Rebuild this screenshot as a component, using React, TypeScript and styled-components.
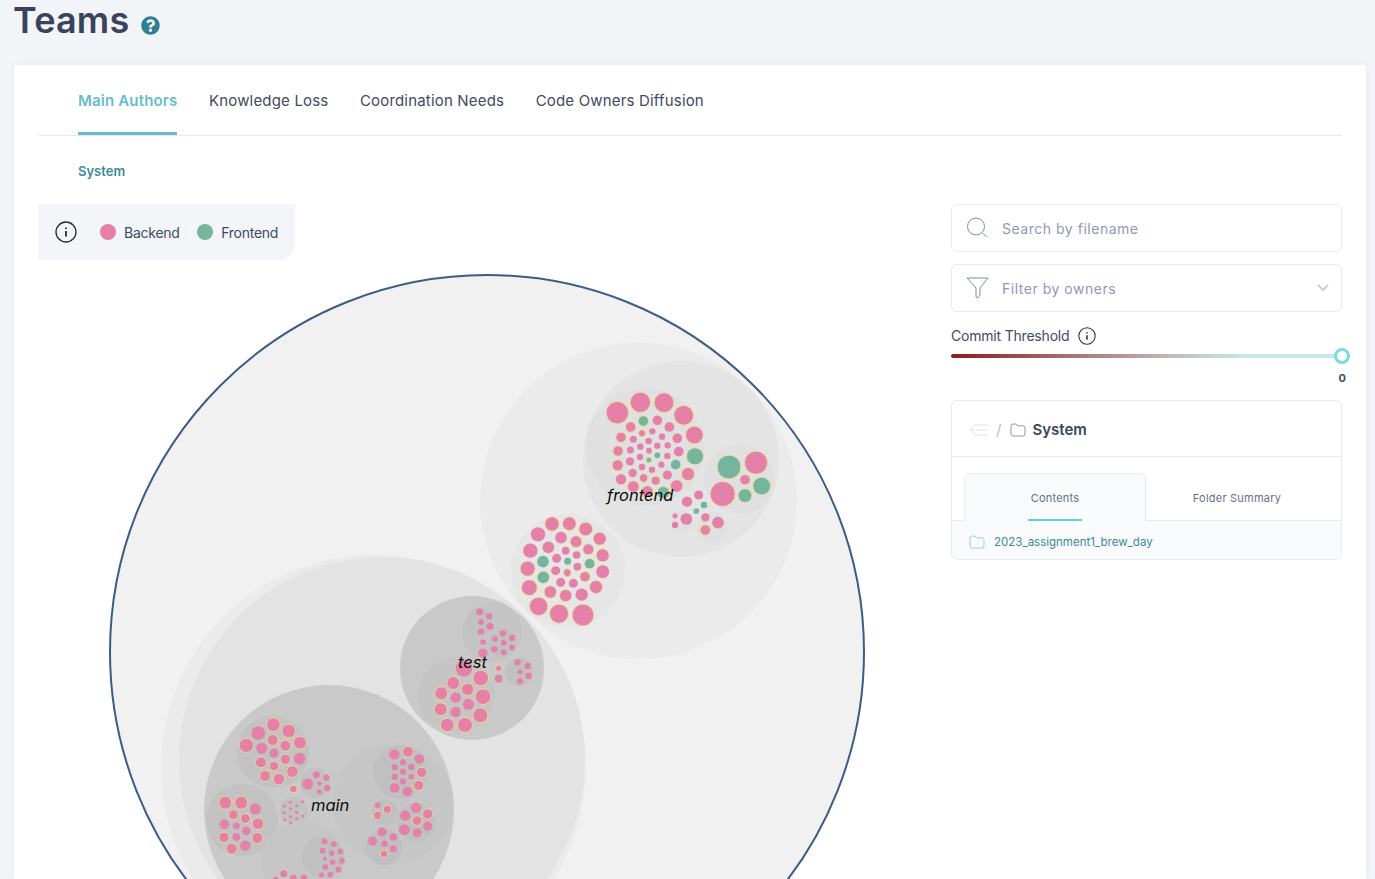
import React from 'react';
import styled, { createGlobalStyle } from 'styled-components';
import { FaQuestionCircle } from 'react-icons/fa';

type Dot = [number, number, number, string?];

interface Cluster {
  ox: number;
  oy: number;
  dots: Dot[];
}

// bubble colours: p = pink, y = pink with yellow ring, g = green, h = green with ring
const FILL: Record<string, string> = { p: '#e580a6', y: '#e580a6', g: '#75b49d', h: '#75b49d' };

const HULLS: [number, number, number, string][] = [
  [638.5, 501, 158.5, '#ebebeb'],
  [681, 459, 98, '#e4e4e4'],
  [645, 447, 59, '#e0e0e0'],
  [739, 479, 35, '#e0e0e0'],
  [682, 522, 11, '#e0e0e0'],
  [712, 527, 15, '#e0e0e0'],
  [568, 571, 57, '#e6e6e6'],
  [373.5, 767, 212.5, '#ebebeb'],
  [382, 760, 203, '#e3e3e3'],
  [472, 668, 72, '#c9c9c9'],
  [492, 632, 30, '#c5c5c5'],
  [479, 622, 13.5, '#c1c1c1'],
  [503, 643, 14, '#c1c1c1'],
  [519, 672, 14, '#c1c1c1'],
  [456, 695, 38, '#c5c5c5'],
  [329, 810, 125, '#c9c9c9'],
  [273, 752, 36, '#c2c2c2'],
  [242, 820, 36, '#c2c2c2'],
  [315, 783, 15, '#c2c2c2'],
  [294, 811, 14, '#c2c2c2'],
  [303, 862, 42, '#c6c6c6'],
  [323, 857, 21, '#c0c0c0'],
  [393, 803, 60, '#c6c6c6'],
  [400, 772, 27, '#c0c0c0'],
  [385, 812, 13, '#c0c0c0'],
  [416, 822, 19, '#c0c0c0'],
  [384, 847, 18, '#c0c0c0'],
];

const CLUSTERS: Cluster[] = [
  {
    ox: 570,
    oy: 380,
    dots: [
      [142, 98, 33, 'y'], [211, 67, 30, 'y'], [282, 68, 29, 'y'], [341, 106, 29, 'y'], [373, 165, 26, 'y'],
      [375, 229, 25, 'h'], [354, 282, 19, 'y'], [320, 318, 18, 'y'], [280, 338, 18, 'h'], [232, 335, 17, 'y'],
      [190, 320, 17, 'y'], [153, 298, 16, 'y'], [143, 256, 16, 'y'], [144, 213, 15, 'y'], [153, 172, 15, 'y'],
      [182, 141, 15, 'y'], [220, 123, 15, 'h'], [262, 121, 14], [298, 141, 14], [322, 175, 14],
      [326, 215, 14], [317, 254, 14, 'g'], [292, 285, 13], [257, 302, 13, 'y'], [221, 294, 12, 'y'],
      [188, 279, 12], [180, 244, 12], [181, 210, 10], [190, 178, 10], [216, 160, 10, 'y'],
      [247, 154, 9], [276, 170, 9], [293, 196, 9], [292, 228, 9], [274, 254, 9],
      [246, 269, 9], [216, 261, 9], [210, 231, 9], [211, 200, 9], [236, 183, 9],
      [262, 197, 9], [237, 212, 8], [262, 226, 8, 'g'], [237, 240, 8, 'h'],
      [477, 261, 35, 'h'], [558, 248, 34, 'y'], [458, 342, 37, 'y'], [575, 318, 26, 'h'], [525, 347, 20, 'h'],
      [525, 299, 15, 'y'], [386, 345, 13], [351, 365, 15], [402, 375, 9, 'g'], [379, 393, 8, 'g'],
      [406, 412, 12], [444, 428, 17], [406, 450, 15, 'y'], [349, 417, 17], [315, 407, 7], [315, 435, 9],
    ],
  },
  {
    ox: 500,
    oy: 505,
    dots: [
      [156, 57, 21, 'y'], [208, 56, 20, 'y'], [257, 72, 20, 'y'], [299, 101, 19, 'y'], [308, 151, 19, 'y'],
      [308, 200, 19], [288, 246, 19, 'y'], [245, 269, 18], [197, 272, 18, 'y'], [151, 261, 18, 'y'],
      [88, 248, 23, 'y'], [83, 191, 22, 'y'], [91, 137, 21], [114, 88, 21], [145, 127, 17],
      [183, 98, 17], [228, 110, 17, 'y'], [265, 133, 16, 'y'], [269, 176, 15, 'h'], [255, 215, 15, 'y'],
      [220, 235, 13], [182, 232, 13], [167, 197, 13], [130, 217, 18, 'h'], [129, 170, 17, 'g'],
      [170, 160, 13], [197, 137, 11], [230, 150, 11], [232, 185, 11], [203, 169, 10, 'g'],
      [202, 203, 11, 'y'], [116, 304, 27, 'y'], [177, 326, 28, 'y'], [249, 330, 32, 'y'],
    ],
  },
  {
    ox: 395,
    oy: 590,
    dots: [
      [254, 65, 10], [283, 78, 9], [258, 96, 8], [285, 109, 10], [258, 125, 9], [264, 156, 8],
      [264, 189, 13], [207, 235, 24], [257, 264, 23, 'y'], [311, 235, 9, 'y'], [311, 266, 11],
      [175, 279, 19, 'y'], [218, 298, 18, 'y'], [264, 320, 23, 'y'], [139, 310, 19, 'y'], [182, 323, 15],
      [220, 343, 16], [137, 358, 19, 'y'], [182, 366, 15], [256, 376, 22, 'y'], [157, 405, 20, 'y'], [210, 405, 22, 'y'],
      [324, 130, 9], [300, 147, 8], [351, 144, 9], [326, 158, 8], [298, 178, 9], [326, 187, 8], [351, 172, 8],
      [368, 217, 9], [398, 228, 9], [375, 246, 7], [401, 258, 9], [375, 274, 9],
    ],
  },
  {
    ox: 200,
    oy: 700,
    dots: [
      [220, 74, 20, 'y'], [175, 99, 20], [266, 93, 20, 'y'], [139, 136, 21, 'y'], [218, 120, 16, 'y'],
      [185, 145, 16], [256, 137, 16, 'y'], [300, 128, 19, 'y'], [222, 159, 13], [299, 176, 17],
      [183, 187, 16, 'y'], [256, 178, 15, 'y'], [222, 198, 14, 'y'], [277, 215, 17, 'y'], [195, 228, 16, 'y'],
      [237, 237, 17, 'y'], [280, 267, 11, 'y'],
      [76, 308, 19, 'y'], [124, 308, 19, 'y'], [166, 327, 16], [100, 344, 14, 'y'], [136, 356, 14, 'y'],
      [174, 371, 17, 'y'], [73, 373, 14], [109, 378, 10], [139, 393, 12], [72, 412, 15, 'y'],
      [109, 411, 11], [172, 414, 16, 'y'], [136, 437, 15], [95, 446, 16, 'y'],
      [323, 252, 16], [349, 224, 10], [379, 233, 9], [358, 250, 6], [382, 264, 9], [358, 275, 7],
      [271, 307, 4], [307, 305, 4], [253, 318, 4], [290, 317, 4], [272, 327, 4], [308, 348, 4],
      [253, 338, 4], [290, 337, 4], [271, 350, 4], [254, 359, 4], [290, 356, 4], [272, 369, 4],
      [251, 521, 10], [280, 533, 9], [312, 533, 9], [227, 537, 7],
    ],
  },
  {
    ox: 320,
    oy: 735,
    dots: [
      [223, 58, 15], [264, 50, 16, 'y'], [298, 72, 14], [249, 82, 9], [224, 97, 9], [274, 96, 9], [249, 110, 9],
      [305, 112, 15, 'y'], [224, 125, 9], [274, 125, 8], [249, 139, 9], [296, 151, 15, 'y'], [224, 159, 14], [262, 170, 14],
      [173, 210, 8], [202, 223, 12, 'y'], [173, 241, 12, 'y'],
      [288, 218, 15], [256, 242, 15], [323, 237, 15, 'y'], [291, 257, 14, 'y'], [253, 284, 16], [323, 274, 13], [291, 293, 13],
      [186, 291, 13], [220, 306, 11], [158, 318, 13], [193, 326, 9], [220, 341, 10], [192, 357, 11, 'y'],
      [14, 319, 8], [42, 327, 8], [8, 347, 8], [35, 354, 8], [61, 349, 8], [15, 371, 5], [38, 381, 8],
      [66, 377, 8], [55, 404, 8], [16, 396, 8], [31, 419, 8], [4, 420, 7],
    ],
  },
];

const GlobalStyle = createGlobalStyle`
  html, body {
    margin: 0;
    height: 879px;
    overflow: hidden;
    background: #f2f4f8;
    font-family: Inter, "Noto Sans", sans-serif;
    color: #3b4560;
  }
`;

const Page = styled.div`
  display: flex;
  flex-direction: column;
  height: 879px;
  padding: 0 9px 0 14px;
  box-sizing: border-box;
`;

const Heading = styled.div`
  display: flex;
  align-items: center;
  gap: 12px;
  height: 65px;
  padding-bottom: 25px;
  box-sizing: border-box;
`;

const Title = styled.h1`
  margin: 0 0 0 -1px;
  font-size: 36px;
  font-weight: 600;
  letter-spacing: 0.2px;
  line-height: 40px;
  color: #39435c;
`;

const HelpIcon = styled(FaQuestionCircle)`
  width: 19px;
  height: 19px;
  color: #2f7f93;
  margin-top: 10px;
`;

const Card = styled.section`
  flex: 1;
  background: #fff;
  padding: 0 24px;
  box-shadow: 0 0 8px rgba(60, 70, 100, 0.06);
  border-radius: 2px 2px 0 0;
  overflow: hidden;
`;

const TabBar = styled.nav`
  display: flex;
  gap: 31.5px;
  height: 70px;
  padding-left: 40px;
  border-bottom: 1px solid #e8eaf2;
`;

const Tab = styled.div<{ $active?: boolean }>`
  height: 70px;
  line-height: 71px;
  box-sizing: border-box;
  font-size: 15px;
  letter-spacing: 0.18px;
  font-weight: ${(p) => (p.$active ? 600 : 400)};
  color: ${(p) => (p.$active ? '#66bdc9' : '#3f4a63')};
  border-bottom: 3px solid ${(p) => (p.$active ? '#66bdc9' : 'transparent')};
  white-space: nowrap;
`;

const Crumb = styled.div`
  height: 68px;
  line-height: 71px;
  padding-left: 40px;
  font-size: 13px;
  font-weight: 600;
  color: #3c8a9b;
`;

const Columns = styled.div`
  display: flex;
  justify-content: space-between;
`;

const LeftColumn = styled.div`
  display: flex;
  flex-direction: column;
  align-items: flex-start;
  width: 880px;
`;

const Legend = styled.div`
  display: flex;
  align-items: center;
  width: 257px;
  height: 56px;
  box-sizing: border-box;
  padding-left: 17px;
  background: #f3f5f9;
  border-radius: 0 0 16px 0;
`;

const LegendDot = styled.span<{ $color: string }>`
  flex: none;
  width: 16px;
  height: 16px;
  margin-right: 8px;
  border-radius: 50%;
  background: ${(p) => p.$color};
`;

const LegendLabel = styled.span`
  font-size: 14px;
  letter-spacing: -0.25px;
  margin-right: 17.5px;
  color: #3f4a63;
  white-space: nowrap;
`;

const LegendInfo = styled.span`
  display: flex;
  flex: none;
  margin-right: 23px;
`;

const Chart = styled.svg`
  display: block;
  margin-top: 10px;
  flex: none;
`;

const Side = styled.aside`
  display: flex;
  flex-direction: column;
  width: 391px;
`;

const Field = styled.div`
  display: flex;
  align-items: center;
  height: 48px;
  box-sizing: border-box;
  margin-bottom: 12px;
  padding: 0 12px 0 13px;
  border: 1px solid #e8eaf2;
  border-radius: 6px;
`;

const FieldIcon = styled.svg`
  flex: none;
  width: 24px;
  height: 24px;
  margin-right: 13px;
`;

const FieldText = styled.span`
  flex: 1;
  font-size: 14px;
  letter-spacing: 0.52px;
  color: #8d99b8;
`;

const ThresholdLabel = styled.div`
  display: flex;
  align-items: center;
  gap: 9px;
  height: 23px;
  font-size: 14px;
  letter-spacing: -0.2px;
  color: #3f4a63;
`;

const Track = styled.div`
  position: relative;
  height: 4px;
  margin-top: 7px;
  border-radius: 2px;
  background: linear-gradient(90deg, #8e1b1f 0%, #b69a9a 45%, #c4c4c4 60%, #c6e7e7 75%, #c6e7e7 100%);
`;

const Thumb = styled.span`
  position: absolute;
  right: -8px;
  top: -6px;
  width: 16px;
  height: 16px;
  box-sizing: border-box;
  border: 3px solid #7cd9de;
  border-radius: 50%;
  background: #fff;
`;

const ThresholdValue = styled.div`
  height: 42px;
  padding-top: 13px;
  margin-right: -4px;
  box-sizing: border-box;
  text-align: right;
  font-size: 11px;
  font-weight: 700;
  color: #3f4a63;
`;

const Browser = styled.div`
  border: 1px solid #e8eaf2;
  border-radius: 6px;
  overflow: hidden;
`;

const BrowserHead = styled.div`
  display: flex;
  align-items: center;
  height: 53px;
  padding: 2px 0 0 17px;
  border-bottom: 1px solid #e8eaf2;
  font-size: 15px;
  font-weight: 600;
  color: #3b4560;
`;

const Slash = styled.span`
  margin: 0 9px 0 8px;
  font-size: 15px;
  font-weight: 400;
  color: #b5bccd;
`;

const FolderName = styled.span`
  margin-left: 6px;
`;

const SubTabs = styled.div`
  display: flex;
  padding: 16px 0 0 12px;
  border-bottom: 1px solid #e8eaf2;
`;

const SubTab = styled.div<{ $active?: boolean }>`
  position: relative;
  width: 182px;
  height: ${(p) => (p.$active ? '48px' : '47px')};
  box-sizing: border-box;
  line-height: 48px;
  margin-bottom: ${(p) => (p.$active ? '-1px' : '0')};
  text-align: center;
  font-size: 11px;
  letter-spacing: 0.22px;
  color: #667089;
  background: ${(p) => (p.$active ? '#f9fafc' : 'transparent')};
  border: 1px solid ${(p) => (p.$active ? '#e8eaf2' : 'transparent')};
  border-bottom: 0;
  border-radius: 6px 6px 0 0;

  &::after {
    content: '';
    display: ${(p) => (p.$active ? 'block' : 'none')};
    position: absolute;
    left: 63px;
    bottom: 0;
    width: 54px;
    height: 2px;
    background: #5dd3d5;
  }
`;

const FileRow = styled.div`
  display: flex;
  align-items: center;
  gap: 9px;
  height: 35px;
  padding: 3px 0 0 17px;
  background: #f9fafc;
  font-size: 11.5px;
  color: #3c8a9b;
`;

const InfoIcon = ({ size }: { size: number }) => (
  <svg width={size} height={size} viewBox="0 0 22 22" fill="none" stroke="#26293a" strokeWidth="1.3">
    <circle cx="11" cy="11" r="10" />
    <path d="M11 10v5.5M11 6.5v1.4" strokeWidth="1.8" />
  </svg>
);

const FolderIcon = ({ stroke }: { stroke: string }) => (
  <svg width="16" height="14" viewBox="0 0 16 14" fill="none" stroke={stroke} strokeWidth="1">
    <path d="M1 3a2 2 0 0 1 2-2h3l1.6 1.8H13a2 2 0 0 1 2 2V11a2 2 0 0 1-2 2H3a2 2 0 0 1-2-2z" />
  </svg>
);

const Bubbles = () => (
  <>
    <circle cx="487" cy="652" r="377" fill="#f1f1f1" stroke="#3c5c88" strokeWidth="2" />
    {HULLS.map(([cx, cy, r, fill], i) => (
      <circle key={i} cx={cx} cy={cy} r={r} fill={fill} />
    ))}
    {CLUSTERS.map((c) =>
      c.dots.map(([x, y, r, kind = 'p'], i) => (
        <circle
          key={`${c.ox}-${i}`}
          cx={c.ox + x / 3}
          cy={c.oy + y / 3}
          r={r / 3 + 0.2}
          fill={FILL[kind]}
          stroke={kind === 'y' || kind === 'h' ? '#f3e196' : 'none'}
          strokeWidth="0.8"
        />
      ))
    )}
  </>
);

const ChartLabel = styled.text`
  font-family: Inter, sans-serif;
  font-size: 16.5px;
  font-style: italic;
  fill: #0a0a0a;
`;

export default function App() {
  return (
    <Page>
      <GlobalStyle />
      <Heading>
        <Title>Teams</Title>
        <HelpIcon />
      </Heading>
      <Card>
        <TabBar>
          <Tab $active>Main Authors</Tab>
          <Tab>Knowledge Loss</Tab>
          <Tab>Coordination Needs</Tab>
          <Tab>Code Owners Diffusion</Tab>
        </TabBar>
        <Crumb>System</Crumb>
        <Columns>
          <LeftColumn>
            <Legend>
              <LegendInfo>
                <InfoIcon size={22} />
              </LegendInfo>
              <LegendDot $color="#e580a6" />
              <LegendLabel>Backend</LegendLabel>
              <LegendDot $color="#75b49d" />
              <LegendLabel>Frontend</LegendLabel>
            </Legend>
            <Chart width="880" height="609" viewBox="38 270 880 609">
              <Bubbles />
              <ChartLabel x="607" y="501">frontend</ChartLabel>
              <ChartLabel x="458" y="668">test</ChartLabel>
              <ChartLabel x="311" y="811">main</ChartLabel>
            </Chart>
          </LeftColumn>
          <Side>
            <Field>
              <FieldIcon viewBox="0 0 24 24" fill="none" stroke="#7f8ba8" strokeWidth="1">
                <circle cx="11" cy="10.5" r="8.5" />
                <path d="M17.5 17l4.5 4" />
              </FieldIcon>
              <FieldText>Search by filename</FieldText>
            </Field>
            <Field>
              <FieldIcon viewBox="0 0 24 24" fill="none" stroke="#7f8ba8" strokeWidth="1">
                <path d="M2 2h21l-8 10v7l-2.5 3-1.5-1v-9z" />
              </FieldIcon>
              <FieldText>Filter by owners</FieldText>
              <svg width="12" height="8" viewBox="0 0 12 8" fill="none" stroke="#cfcfcf" strokeWidth="2">
                <path d="M1 1l5 5 5-5" />
              </svg>
            </Field>
            <ThresholdLabel>
              Commit Threshold
              <InfoIcon size={18} />
            </ThresholdLabel>
            <Track>
              <Thumb />
            </Track>
            <ThresholdValue>0</ThresholdValue>
            <Browser>
              <BrowserHead>
                <svg width="19" height="12" viewBox="0 0 19 12" fill="none" stroke="#dfe3ec" strokeWidth="1">
                  <path d="M6 1L1 6l5 5M2 6h17M6 1h13M6 11h13" />
                </svg>
                <Slash>/</Slash>
                <FolderIcon stroke="#8b94aa" />
                <FolderName>System</FolderName>
              </BrowserHead>
              <SubTabs>
                <SubTab $active>Contents</SubTab>
                <SubTab>Folder Summary</SubTab>
              </SubTabs>
              <FileRow>
                <FolderIcon stroke="#a9cbd2" />
                2023_assignment1_brew_day
              </FileRow>
            </Browser>
          </Side>
        </Columns>
      </Card>
    </Page>
  );
}
